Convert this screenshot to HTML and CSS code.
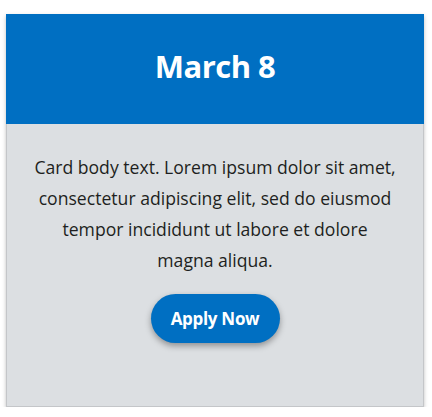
FILE: index.html
```html
<!DOCTYPE html>
<html>
<head>
<meta charset="utf-8">
<link rel="stylesheet" href="styles.css">
</head>
<body>
<div class="card">
  <div class="card-header"><h2 class="card-title">March 8</h2></div>
  <div class="card-body">
    <p class="card-text">Card body text. Lorem ipsum dolor sit amet, consectetur adipiscing elit, sed do eiusmod tempor incididunt ut labore et dolore magna aliqua.</p>
    <button class="btn">Apply Now</button>
  </div>
</div>
</body>
</html>
```
FILE: styles.css
```css
html, body { margin: 0; padding: 0; background: #fff; }
body { font-family: "Open Sans", "Noto Sans", sans-serif; }
.card {
  margin: 14px 8px 0 6px;
  height: 393px;
  box-sizing: border-box;
  border: 1px solid #c4c6c9;
  background: #dcdfe2;
  box-shadow: 0 2px 4px rgba(0,0,0,0.25);
  display: flex;
  flex-direction: column;
}
.card-header {
  background: #006fc2;
  height: 110px;
  margin: -1px -1px 0 -1px;
  display: flex;
  align-items: center;
  justify-content: center;
  padding-bottom: 6px;
  box-sizing: border-box;
}
.card-title {
  margin: 0;
  color: #fff;
  font-size: 31px;
  font-weight: 700;
  letter-spacing: -0.5px;
}
.card-body {
  padding: 28px 26px 0;
  display: flex;
  flex-direction: column;
  align-items: center;
}
.card-text {
  margin: 0;
  text-align: center;
  font-size: 17.6px;
  line-height: 31px;
  color: #1e1f21;
}
.btn {
  margin-top: 18px;
  height: 49px;
  width: 129px;
  border: none;
  border-radius: 25px;
  background: #006fc2;
  color: #fff;
  font-family: inherit;
  font-size: 17px;
  font-weight: 700;
  letter-spacing: -0.3px;
  box-shadow: 0 3px 6px rgba(0,0,0,0.35);
}
```
